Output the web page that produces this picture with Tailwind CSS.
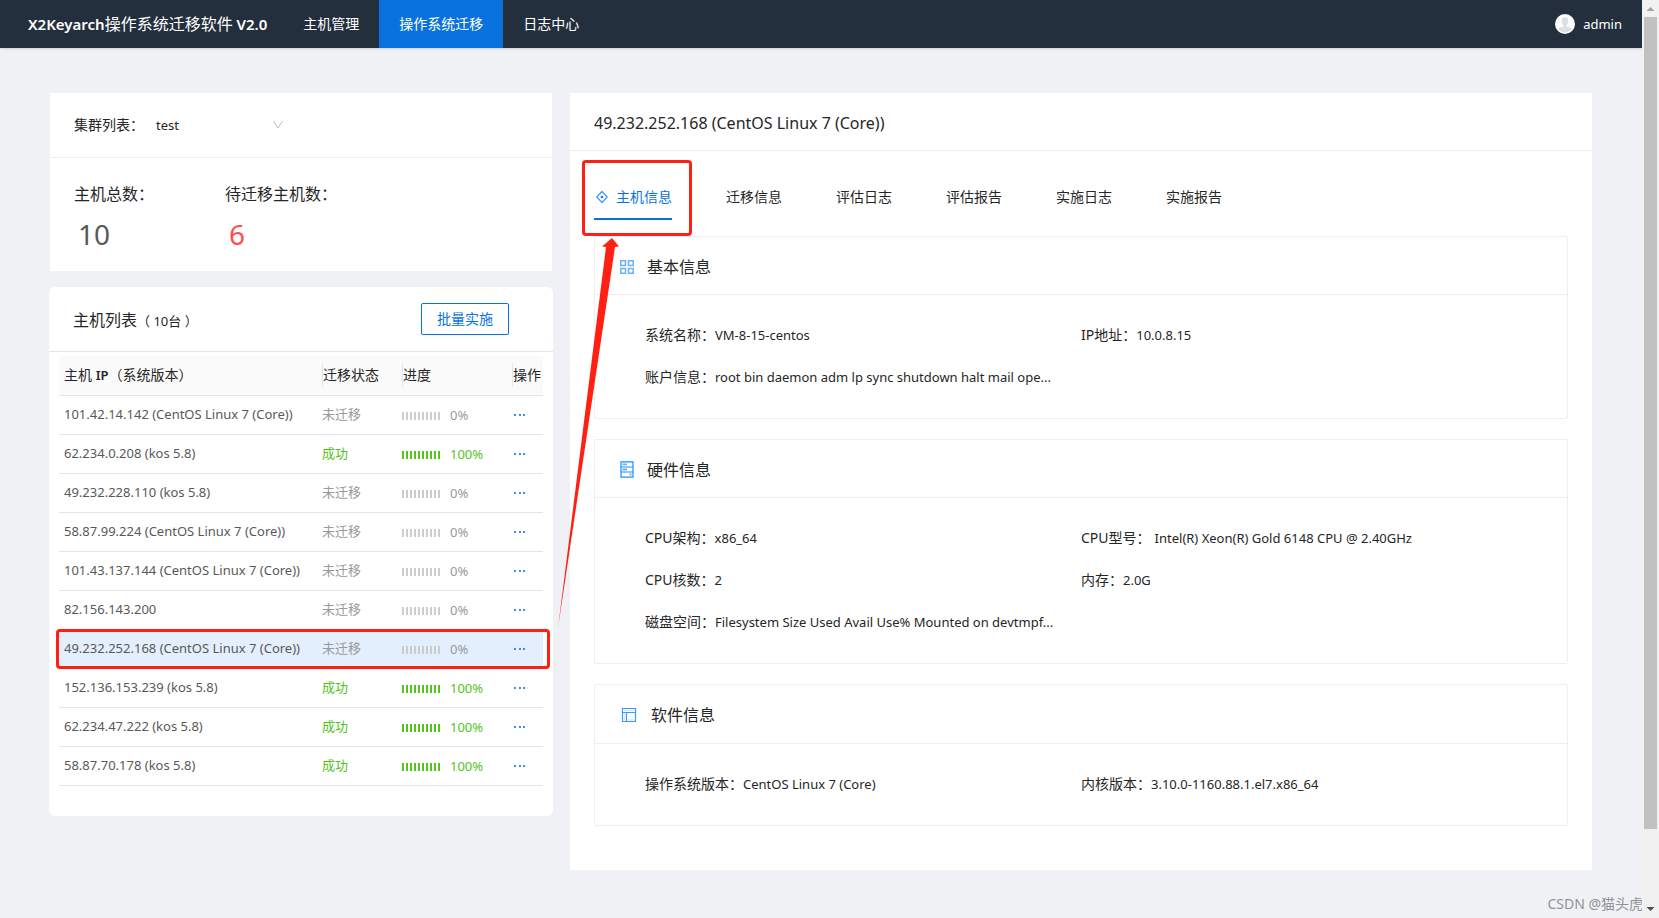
<!DOCTYPE html>
<html lang="zh-CN">
<head>
<meta charset="utf-8">
<title>X2Keyarch操作系统迁移软件 V2.0</title>
<script src="https://cdn.jsdelivr.net/npm/@tailwindcss/browser@4"></script>
</head>
<body class="flex min-h-screen bg-[#f0f1f5] text-sm text-[#262626] font-['Noto_Sans','Noto_Sans_CJK_SC',sans-serif]">
<div class="relative flex min-w-0 flex-1 flex-col">
  <header class="flex h-12 items-center bg-[#242f3d] pl-7 pr-5 text-white shadow-sm">
    <h1 class="mr-4 text-base"><span class="text-[15px] font-semibold">X2Keyarch</span>操作系统迁移软件<span class="text-[15px] font-semibold"> V2.0</span></h1>
    <nav class="flex h-full flex-1">
      <a href="#" class="flex items-center px-5">主机管理</a>
      <a href="#" class="flex items-center bg-[#0972de] px-5">操作系统迁移</a>
      <a href="#" class="flex items-center px-5">日志中心</a>
    </nav>
    <button type="button" class="flex items-center gap-2">
      <svg class="size-5" viewBox="0 0 20 20"><circle cx="10" cy="10" r="10" fill="#fff"/><path d="M6.700 7c0-2.600 1.300-4 3.300-4s3.300 1.400 3.300 4c0 1.800-.6 3.200-1.500 4v1.400c1.800.5 4.200 1 5 2.600a8.500 8.500 0 0 1-13.600 0c.8-1.600 3.200-2.100 5-2.600V11C7.300 10.200 6.700 8.800 6.700 7z" fill="#dcdfe3"/></svg>
      <span class="text-[13px]">admin</span>
    </button>
  </header>

  <main class="flex flex-1 items-start gap-[17px] pt-[45px] pr-[50px] pb-12 pl-[49px]">
    <div class="flex w-[504px] shrink-0 flex-col gap-4">
      <section class="mx-px bg-white">
        <div class="flex h-[65px] items-center border-b border-[#eeeeef] px-6">
          <label for="cluster">集群列表：</label>
          <div class="relative ml-3 w-[128px]">
            <select id="cluster" class="w-full appearance-none bg-transparent text-[13px] outline-none"><option>test</option></select>
            <svg class="pointer-events-none absolute top-[5px] right-0 h-2.5 w-3" viewBox="0 0 12 10" fill="none" stroke="#bfbfbf"><path d="M1.500 1l4.500 7 4.500-7"/></svg>
          </div>
        </div>
        <dl class="flex h-[113px] gap-[71px] px-6 pt-6 text-base">
          <div><dt class="leading-6">主机总数：</dt><dd class="pt-1 pl-1 text-[28px] leading-12 text-[#595959]">10</dd></div>
          <div><dt class="leading-6">待迁移主机数：</dt><dd class="pt-1 pl-1 text-[28px] leading-12 text-[#ff4d4f]">6</dd></div>
        </dl>
      </section>

      <section class="rounded-md bg-white pb-[30px]">
        <div class="flex h-[65px] items-center justify-between border-b border-[#e4e4f0] pr-11 pl-6">
          <h2 class="pt-0.5 text-base">主机列表<span class="text-[13px]">（ 10台 ）</span></h2>
          <button type="button" class="h-8 rounded-xs border border-[#0972de] px-[15px] text-[#0972de] shadow-xs">批量实施</button>
        </div>
        <div class="px-2.5 pt-1">
          <table class="w-full table-fixed border-collapse text-left">
            <colgroup><col><col class="w-20"><col class="w-[110px]"><col class="w-[31px]"></colgroup>
            <thead>
              <tr class="h-[39px] border-b border-[#e4e4f0] bg-[#fafafa] whitespace-nowrap">
                <th class="pl-[5px] font-normal">主机 <span class="text-[13px] font-semibold">IP</span>（系统版本）</th>
                <th class="font-normal"><div class="border-l border-[#e6e6e6] leading-6">迁移状态</div></th>
                <th class="font-normal"><div class="border-l border-[#e6e6e6] leading-6">进度</div></th>
                <th class="font-normal"><div class="border-l border-[#e6e6e6] leading-6">操作</div></th>
              </tr>
            </thead>
            <tbody id="hosts" class="text-[13px] text-[#595959]"></tbody>
          </table>
        </div>
      </section>
    </div>

    <section class="min-w-0 flex-1 bg-white pb-11">
      <h2 class="flex h-[58px] items-center border-b border-[#eeeeef] px-6 pt-0.5 text-base">49.232.252.168 (CentOS Linux 7 (Core))</h2>
      <nav class="flex h-[85px] items-start gap-[54px] px-6 pt-[23px]">
        <a href="#" class="relative flex h-[46px] items-center gap-2 border-b-2 border-[#0972de] pt-0.5 text-[#0972de]">
          <svg class="size-3.5" viewBox="0 0 14 14" fill="none" stroke="#3d9bf5" stroke-width="1.300"><path d="M8 1.500L13.200 7 8 12.500 2.800 7z"/><circle cx="8" cy="7" r="1.300" fill="#1677e6" stroke="none"/></svg>
          主机信息
          <span class="absolute -top-3.5 -right-5 -bottom-[18px] -left-3 rounded-sm border-3 border-[#ff2013]"></span>
        </a>
        <a href="#" class="flex h-[46px] items-center border-b-2 border-transparent pt-0.5">迁移信息</a>
        <a href="#" class="flex h-[46px] items-center border-b-2 border-transparent pt-0.5">评估日志</a>
        <a href="#" class="flex h-[46px] items-center border-b-2 border-transparent pt-0.5">评估报告</a>
        <a href="#" class="flex h-[46px] items-center border-b-2 border-transparent pt-0.5">实施日志</a>
        <a href="#" class="flex h-[46px] items-center border-b-2 border-transparent pt-0.5">实施报告</a>
      </nav>

      <div class="flex flex-col gap-5 px-6">
        <article class="rounded-xs border border-[#eeeeef]">
          <h3 class="flex h-[58px] items-center gap-3 border-b border-[#eeeeef] px-6 pt-0.5 text-base">
            <svg class="size-4" viewBox="0 0 16 16" fill="#fff" stroke="#69b1f8" stroke-width="1.500"><path d="M1.800 1.800h4.700v4.700H1.800zM9.500 1.800h4.700v4.700H9.500zM1.800 9.500h4.700v4.700H1.800zM9.500 9.500h4.700v4.700H9.500z"/></svg>
            基本信息
          </h3>
          <dl class="grid grid-cols-2 gap-y-[18px] px-[50px] pt-7 pb-[29px] leading-6">
            <div class="flex"><dt>系统名称：</dt><dd class="text-[13px]">VM-8-15-centos</dd></div>
            <div class="flex"><dt>IP地址：</dt><dd class="text-[13px]">10.0.8.15</dd></div>
            <div class="flex"><dt>账户信息：</dt><dd class="text-[13px]">root bin daemon adm lp sync shutdown halt mail ope...</dd></div>
          </dl>
        </article>
        <article class="rounded-xs border border-[#eeeeef]">
          <h3 class="flex h-[58px] items-center gap-3 border-b border-[#eeeeef] px-6 pt-0.5 text-base">
            <svg class="h-[17px] w-4" viewBox="0 0 16 17" fill="#fff" stroke="#1890ff" stroke-width="1.200"><path d="M2 .8h12v15.400H2zM2 6h12M2 11h12"/><path d="M3.500 3.400H8M3.500 8.500H8M10.500 13.500h2" stroke="#69b1f8" stroke-width="1.800"/></svg>
            硬件信息
          </h3>
          <dl class="grid grid-cols-2 gap-y-[18px] px-[50px] pt-7 pb-[29px] leading-6">
            <div class="flex"><dt>CPU架构：</dt><dd class="text-[13px]">x86_64</dd></div>
            <div class="flex"><dt>CPU型号：</dt><dd class="pl-1 text-[13px]">Intel(R) Xeon(R) Gold 6148 CPU @ 2.40GHz</dd></div>
            <div class="flex"><dt>CPU核数：</dt><dd class="text-[13px]">2</dd></div>
            <div class="flex"><dt>内存：</dt><dd class="text-[13px]">2.0G</dd></div>
            <div class="flex"><dt>磁盘空间：</dt><dd class="text-[13px]">Filesystem Size Used Avail Use% Mounted on devtmpf...</dd></div>
          </dl>
        </article>
        <article class="rounded-xs border border-[#eeeeef]">
          <h3 class="flex h-[59px] items-center gap-3.5 border-b border-[#eeeeef] px-[26px] pt-0.5 text-base">
            <svg class="size-4" viewBox="0 0 16 16" fill="#fff" stroke="#3d9bf5" stroke-width="1.200"><path d="M1.500 1.500h13v13h-13z"/><path d="M3 3.500h10M3.500 6.500V13M7 13h6.500" stroke="#d6ebff" stroke-width="1.400"/><path d="M1.500 5.500h13M5.500 5.500v9" fill="none"/></svg>
            软件信息
          </h3>
          <dl class="grid grid-cols-2 gap-y-[18px] px-[50px] pt-7 pb-[29px] leading-6">
            <div class="flex"><dt>操作系统版本：</dt><dd class="text-[13px]">CentOS Linux 7 (Core)</dd></div>
            <div class="flex"><dt>内核版本：</dt><dd class="text-[13px]">3.10.0-1160.88.1.el7.x86_64</dd></div>
          </dl>
        </article>
      </div>
    </section>
  </main>

  <svg class="pointer-events-none absolute top-[238px] left-[558px] h-[390px] w-[62px]" viewBox="0 0 62 390" fill="#ff2013"><path d="M0 390L48 9l-4-.5L54 0l7 8.500-4 .5z"/></svg>
  <p class="absolute -right-px bottom-1 text-sm text-[#8f9299]">CSDN @猫头虎</p>
</div>

<aside class="sticky top-0 flex h-screen w-[17px] shrink-0 flex-col items-center bg-[#f1f1f1]" aria-hidden="true">
  <svg class="h-[17px] w-[17px]" viewBox="0 0 17 17" fill="#a3a3a3"><path d="M4.500 11l4-4 4 4z"/></svg>
  <div class="w-[13px] flex-1 bg-[#c1c1c1]"></div>
  <div class="h-[72px]"></div>
  <svg class="h-[17px] w-[17px]" viewBox="0 0 17 17" fill="#505050"><path d="M4.500 6l4 4 4-4z"/></svg>
</aside>

<script>
const hosts = [
  ['101.42.14.142 (CentOS Linux 7 (Core))', 0],
  ['62.234.0.208 (kos 5.8)', 1],
  ['49.232.228.110 (kos 5.8)', 0],
  ['58.87.99.224 (CentOS Linux 7 (Core))', 0],
  ['101.43.137.144 (CentOS Linux 7 (Core))', 0],
  ['82.156.143.200', 0],
  ['49.232.252.168 (CentOS Linux 7 (Core))', 0, 1],
  ['152.136.153.239 (kos 5.8)', 1],
  ['62.234.47.222 (kos 5.8)', 1],
  ['58.87.70.178 (kos 5.8)', 1],
];
document.getElementById('hosts').innerHTML = hosts.map(([name, done, selected]) => `
  <tr class="relative h-[39px] border-b border-[#e4e4f0] whitespace-nowrap ${selected ? 'bg-[#e3effd]' : ''}">
    <td class="pl-[5px]">${name}${selected ? '<span class="absolute top-0 -right-[7px] -bottom-0.5 -left-[3px] rounded-sm border-3 border-[#ff2013]"></span>' : ''}</td>
    <td class="${done ? 'text-[#52c41a]' : 'text-[#999999]'}">${done ? '成功' : '未迁移'}</td>
    <td class="pt-0.5"><div class="flex items-center gap-2.5 ${done ? 'text-[#52c41a]' : 'text-[#999999]'}"><span class="flex gap-0.5">${`<i class="h-2 w-0.5 ${done ? 'bg-[#52c41a]' : 'bg-[#cccccc]'}"></i>`.repeat(10)}</span>${done ? '100%' : '0%'}</div></td>
    <td class="pl-0.5"><button type="button" aria-label="操作" class="block"><svg class="h-2 w-3" viewBox="0 0 12 8" fill="#3a8ee6"><path d="M0 3h2v2H0zM5 3h2v2H5zM9 3h2v2H9z"/></svg></button></td>
  </tr>`).join('');
</script>
</body>
</html>
